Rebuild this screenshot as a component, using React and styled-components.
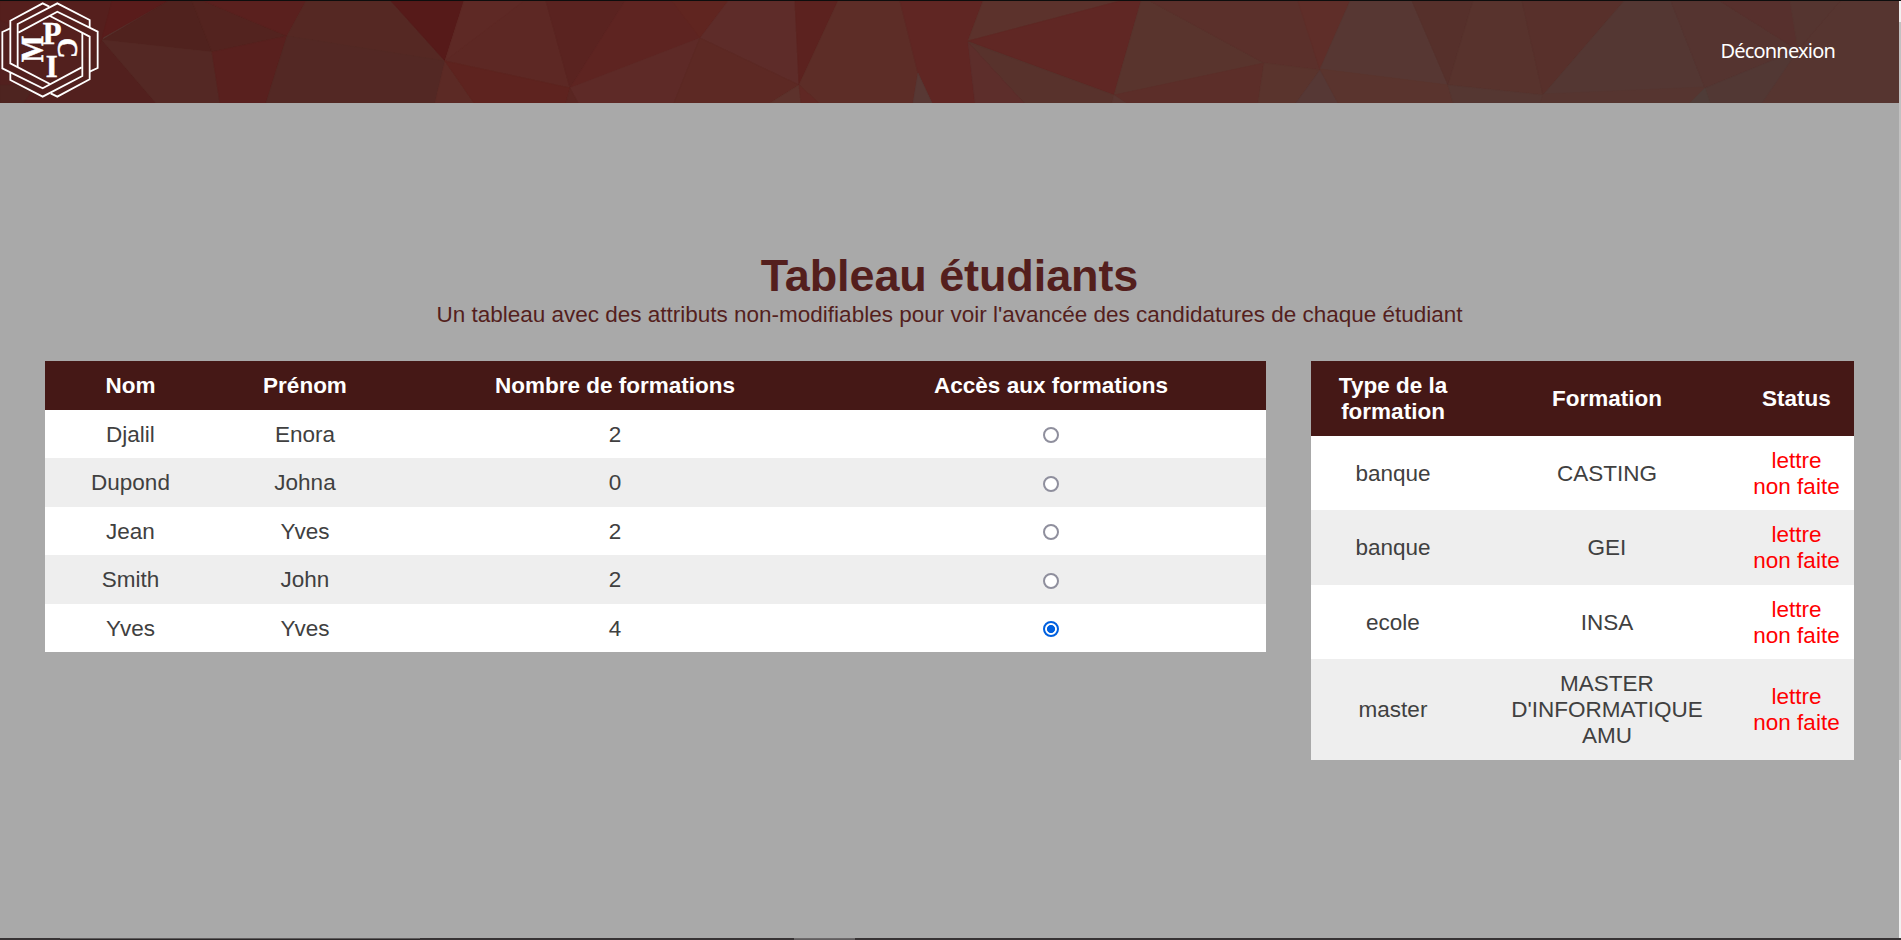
import React, { useState } from "react";
import styled, { createGlobalStyle } from "styled-components";

const GlobalStyle = createGlobalStyle`
  *, *::before, *::after { box-sizing: border-box; }
  body { margin: 0; background: #a9a9a9; overflow: hidden; }
`;

const Screen = styled.div`
  display: grid;
  grid-template-columns: 1fr 2px;
  grid-template-rows: 1px 937px 2px;
  height: 940px;
  font-family: "Liberation Sans", Arial, sans-serif;
  font-size: 22.5px;
  color: #404040;
`;

const TopEdge = styled.div`
  grid-column: 1 / -1;
  background: #0d0d0d;
`;

const Page = styled.div`
  background: #a9a9a9;
`;

const Header = styled.header`
  display: grid;
  height: 102px;
  overflow: hidden;
`;

const Backdrop = styled.svg`
  grid-area: 1 / 1;
  display: block;
`;

const Nav = styled.nav`
  grid-area: 1 / 1;
  z-index: 1;
  display: flex;
  justify-content: space-between;
  align-items: center;
  padding-right: 64px;
`;

const LogoMark = styled.svg`
  display: block;
  width: 100px;
  height: 102px;
`;

const LogoLetter = styled.text`
  font-family: "Liberation Serif", "Times New Roman", serif;
  font-weight: 700;
  font-size: ${(p) => p.$size}px;
  fill: #fff;
  stroke: #fff;
  stroke-width: 1.5px;
  text-anchor: middle;
`;

const NavLink = styled.a`
  padding-bottom: 2px;
  font-family: "Noto Sans", "Open Sans", sans-serif;
  font-size: 20px;
  line-height: 28px;
  letter-spacing: -0.8px;
  color: #fff;
  text-decoration: none;
`;

const Heading = styled.div`
  padding-top: 147px;
  text-align: center;
  color: #541f1d;
`;

const Title = styled.h1`
  margin: 0;
  font-size: 45px;
  line-height: 51px;
  letter-spacing: -0.1px;
`;

const Subtitle = styled.p`
  margin: 1px 0 0;
  line-height: 26px;
`;

const Tables = styled.div`
  display: flex;
  align-items: flex-start;
  gap: 45px;
  padding: 33px 45px 0;
`;

const Table = styled.table`
  width: ${(p) => p.$width}px;
  table-layout: fixed;
  border-collapse: collapse;
  text-align: center;
  line-height: 26px;
`;

const HeadCell = styled.th`
  width: ${(p) => p.$width}px;
  padding: 12px 11.25px 11px;
`;

const Cell = styled.td`
  padding: 12px 11.25px 10px;
  color: ${(p) => (p.$alert ? "#ff0000" : "inherit")};
`;

const Radio = styled.input`
  appearance: none;
  display: block;
  width: 16px;
  height: 16px;
  margin: 0 auto;
  border: 2px solid ${(p) => (p.checked ? "#0060df" : "#8f8f9d")};
  border-radius: 50%;
  background: ${(p) =>
    p.checked ? "radial-gradient(circle, #0060df 0 3.7px, #fff 4.4px)" : "#fff"};
`;

const HeadRow = styled.tr`
  background: #451816;
  color: #fff;
`;

const Row = styled.tr`
  background: ${(p) => (p.$striped ? "#eeeeee" : "#ffffff")};

  & > ${Cell} {
    padding-bottom: ${(p) => (p.$striped ? 11 : 10)}px;
  }

  & ${Radio} {
    margin-top: ${(p) => (p.$striped ? 2 : 0)}px;
  }
`;

const Scrollbar = styled.div`
  display: grid;
  grid-template-rows: 21px 738px 1fr;
  background: #f1f1f1;
`;

const Thumb = styled.div`
  grid-row: 2;
  background: #c1c1c1;
`;

const Taskbar = styled.div`
  grid-column: 1 / -1;
  display: flex;
  background: #373334;
`;

const TaskbarItem = styled.div`
  width: ${(p) => p.$width}px;
  margin-left: ${(p) => p.$gap}px;
  background: ${(p) => (p.$active ? "#625f60" : "#2c2829")};
  border-top: 1px solid ${(p) => (p.$active ? "#6c696a" : "#5e5b5c")};
`;

const facets = [
  ["#52201e", "0,1 112,1 102,40 156,103 0,103"],
  ["#551f1d", "0,1 112,1 102,40 90,60 0,20"],
  ["#4e2420", "0,85 35,85 24,103 0,103"],
  ["#591c1b", "112,1 168,1 102,38"],
  ["#50221e", "168,1 192,1 212,52 102,40"],
  ["#53231f", "192,1 204,1 287,36 212,52"],
  ["#5a201e", "204,1 306,1 287,36"],
  ["#542824", "102,40 212,52 220,103 156,103"],
  ["#59201e", "212,52 287,36 266,103 220,103"],
  ["#552823", "306,1 391,1 445,61 287,36"],
  ["#532824", "287,36 445,61 435,103 266,103"],
  ["#561a19", "391,1 464,1 445,61"],
  ["#5d2824", "464,1 546,1 570,88 445,61"],
  ["#5e2925", "464,1 524,1 445,61"],
  ["#5a2320", "546,1 625,1 570,88"],
  ["#5e2421", "625,1 728,1 700,38 630,65 570,88"],
  ["#602520", "672,1 728,1 700,38"],
  ["#5c2a25", "445,61 474,103 435,103"],
  ["#5e231f", "445,61 570,88 566,103 474,103"],
  ["#5e2a27", "570,88 700,38 674,103 578,103"],
  ["#5a2622", "570,88 578,103 566,103"],
  ["#5e2c29", "728,1 795,1 799,85 700,38"],
  ["#5d2924", "700,38 799,85 770,103 674,103"],
  ["#5c221f", "795,1 838,1 799,85"],
  ["#5d2d27", "838,1 900,1 918,73 913,103 819,103 799,85"],
  ["#5d322c", "799,85 801,103 770,103"],
  ["#602824", "799,85 819,103 801,103"],
  ["#602623", "900,1 983,1 968,41 975,103 932,103 918,73"],
  ["#583834", "918,73 932,103 913,103"],
  ["#5c322c", "983,1 1120,1 968,41"],
  ["#602724", "1120,1 1141,1 1114,95 968,41"],
  ["#58322c", "968,42 1114,95 1112,103 1024,103"],
  ["#5d2e2b", "968,42 1024,103 975,103"],
  ["#59342d", "1141,1 1150,1 1264,63 1114,95"],
  ["#5b302b", "1150,1 1300,1 1320,70 1264,63"],
  ["#5f2e29", "1298,1 1350,1 1320,70"],
  ["#5c2e29", "1114,95 1264,63 1258,103 1126,103"],
  ["#5a3631", "1114,95 1126,103 1112,103"],
  ["#5a342d", "1264,63 1320,70 1296,103 1258,103"],
  ["#563835", "1320,70 1338,103 1296,103"],
  ["#573733", "1350,1 1412,1 1448,85 1320,69"],
  ["#5a342e", "1320,69 1448,85 1453,103 1338,103"],
  ["#56302b", "1412,1 1473,1 1448,85"],
  ["#58332d", "1473,1 1522,1 1543,95 1448,85"],
  ["#58302b", "1522,1 1624,1 1543,95"],
  ["#553732", "1448,85 1543,95 1570,103 1453,103"],
  ["#543733", "1624,1 1671,1 1705,88 1543,95"],
  ["#563530", "1543,94 1705,87 1690,103 1540,103"],
  ["#553430", "1671,1 1720,1 1798,50 1705,88"],
  ["#57302d", "1720,1 1840,1 1798,50"],
  ["#553530", "1790,1 1840,1 1798,50"],
  ["#523834", "1705,88 1798,50 1762,103 1710,103"],
  ["#4f3c38", "1705,88 1710,103 1690,103"],
];

const students = [
  ["Djalil", "Enora", 2],
  ["Dupond", "Johna", 0],
  ["Jean", "Yves", 2],
  ["Smith", "John", 2],
  ["Yves", "Yves", 4],
];

const applications = [
  ["banque", "CASTING"],
  ["banque", "GEI"],
  ["ecole", "INSA"],
  ["master", "MASTER D'INFORMATIQUE AMU"],
];

function Facets() {
  return (
    <Backdrop width="1899" height="102" viewBox="0 1 1899 102" aria-hidden="true">
      <rect width="1899" height="104" fill="#563530" />
      {facets.map(([fill, points]) => (
        <polygon key={points} points={points} fill={fill} stroke={fill} strokeWidth="0.6" />
      ))}
    </Backdrop>
  );
}

function Logo() {
  const bands = (
    <>
      <polyline points="31,85 7,96 7,205 128,265 245,202" />
      <polyline points="148,20 128,10 31,62 31,190 150,252" />
      <polyline points="31,217 31,240 128,290 247,228 247,99" />
    </>
  );
  return (
    <LogoMark viewBox="0 3 300 306" role="img" aria-label="MPCI">
      <g fill="none" stroke="#fff" strokeWidth="5.4">
        {bands}
        <g transform="rotate(180 150 150)">{bands}</g>
      </g>
      <LogoLetter $size={92} x="156" y="132">P</LogoLetter>
      <LogoLetter $size={92} x="155" y="231">I</LogoLetter>
      <LogoLetter $size={93} transform="translate(128.5 147) rotate(-90) scale(0.91 1)">M</LogoLetter>
      <LogoLetter $size={91} transform="translate(173 144) rotate(90) scale(0.94 1)">C</LogoLetter>
    </LogoMark>
  );
}

export default function App() {
  const [selected, setSelected] = useState(4);
  return (
    <>
      <GlobalStyle />
      <Screen>
        <TopEdge />
        <Page>
          <Header>
            <Facets />
            <Nav>
              <Logo />
              <NavLink>Déconnexion</NavLink>
            </Nav>
          </Header>
          <Heading>
            <Title>Tableau étudiants</Title>
            <Subtitle>
              Un tableau avec des attributs non-modifiables pour voir l'avancée des candidatures de
              chaque étudiant
            </Subtitle>
          </Heading>
          <Tables>
            <Table $width={1221}>
              <thead>
                <HeadRow>
                  <HeadCell $width={171}>Nom</HeadCell>
                  <HeadCell $width={178}>Prénom</HeadCell>
                  <HeadCell $width={442}>Nombre de formations</HeadCell>
                  <HeadCell $width={430}>Accès aux formations</HeadCell>
                </HeadRow>
              </thead>
              <tbody>
                {students.map(([last, first, count], i) => (
                  <Row key={i} $striped={i % 2 === 1}>
                    <Cell>{last}</Cell>
                    <Cell>{first}</Cell>
                    <Cell>{count}</Cell>
                    <Cell>
                      <Radio
                        type="radio"
                        name="student"
                        checked={selected === i}
                        onChange={() => setSelected(i)}
                      />
                    </Cell>
                  </Row>
                ))}
              </tbody>
            </Table>
            <Table $width={543}>
              <thead>
                <HeadRow>
                  <HeadCell $width={164}>Type de la formation</HeadCell>
                  <HeadCell $width={264}>Formation</HeadCell>
                  <HeadCell $width={115}>Status</HeadCell>
                </HeadRow>
              </thead>
              <tbody>
                {applications.map(([type, name], i) => (
                  <Row key={i} $striped={i % 2 === 1}>
                    <Cell>{type}</Cell>
                    <Cell>{name}</Cell>
                    <Cell $alert>lettre non faite</Cell>
                  </Row>
                ))}
              </tbody>
            </Table>
          </Tables>
        </Page>
        <Scrollbar>
          <Thumb />
        </Scrollbar>
        <Taskbar>
          <TaskbarItem $gap={60} $width={360} />
          <TaskbarItem $gap={374} $width={61} $active />
        </Taskbar>
      </Screen>
    </>
  );
}
